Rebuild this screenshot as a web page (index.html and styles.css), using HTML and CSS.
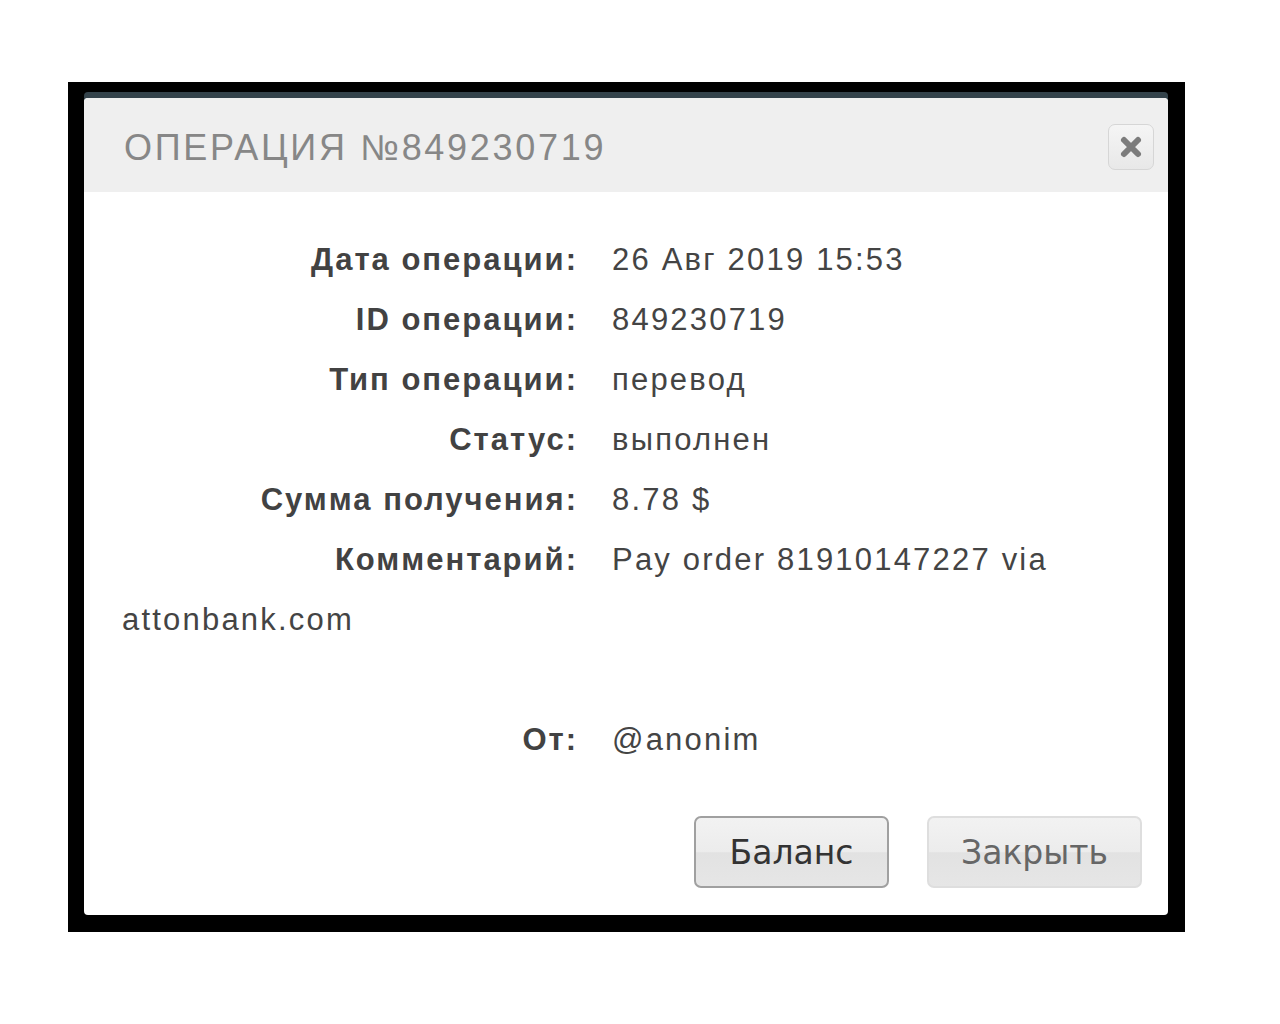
FILE: index.html
```
<!DOCTYPE html>
<html lang="ru">
<head>
    <meta charset="UTF-8">
    <title>Операция №849230719</title>
    <link rel="stylesheet" href="styles.css">
</head>
<body>
    <div class="frame">
        <div class="dialog">
            <div class="dialog-header">
                <span class="dialog-title">ОПЕРАЦИЯ №849230719</span>
                <button class="close-x" title="Закрыть">
                    <svg width="26" height="26" viewBox="0 0 26 26">
                        <path d="M6 6 L20 20 M20 6 L6 20" stroke="#7c7c7c" stroke-width="6" stroke-linecap="round"/>
                    </svg>
                </button>
            </div>
            <div class="dialog-body">
                <div class="row"><span class="label">Дата операции:</span>26 Авг 2019 15:53</div>
                <div class="row"><span class="label">ID операции:</span>849230719</div>
                <div class="row"><span class="label">Тип операции:</span>перевод</div>
                <div class="row"><span class="label">Статус:</span>выполнен</div>
                <div class="row"><span class="label">Сумма получения:</span>8.78 $</div>
                <div class="row"><span class="label">Комментарий:</span>Pay order 81910147227 via attonbank.com</div>
                <div class="row empty"></div>
                <div class="row"><span class="label">От:</span>@anonim</div>
            </div>
            <div class="dialog-footer">
                <button class="btn btn-main">Баланс</button>
                <button class="btn btn-light">Закрыть</button>
            </div>
        </div>
    </div>
</body>
</html>
```

FILE: styles.css
```
body { margin: 0; background: #fff; font-family: "Liberation Sans", Arial, sans-serif; }
.frame { margin: 82px 0 0 68px; width: 1117px; height: 850px; background: #000; padding: 16px 17px 17px 16px; box-sizing: border-box; }
.dialog { background: #fff; border-radius: 4px; box-shadow: 0 -6px 0 #34434b; height: 100%; display: flex; flex-direction: column; }
.dialog-header { height: 94px; background: #efefef; border-radius: 4px 4px 0 0; display: flex; align-items: center; justify-content: space-between; padding: 4px 14px 0 40px; box-sizing: border-box; }
.dialog-title { font-size: 36px; letter-spacing: 2.7px; color: #878787; padding-top: 2px; }
.close-x { width: 46px; height: 46px; border: 1px solid #d6d6d6; border-radius: 7px; background: linear-gradient(#f5f5f5, #e8e8e8); display: flex; align-items: center; justify-content: center; padding: 0; }
.dialog-body { padding: 38px 30px 0 38px; font-size: 31px; line-height: 60px; color: #444; letter-spacing: 2.2px; }
.row { min-height: 60px; }
.label { display: inline-block; width: 456px; margin-right: 34px; text-align: right; font-weight: bold; color: #424242; letter-spacing: 2px; }
.dialog-footer { margin-top: auto; display: flex; justify-content: flex-end; gap: 38px; padding: 0 26px 27px 0; }
.btn { height: 72px; border-radius: 7px; font-family: "DejaVu Sans", Verdana, sans-serif; font-size: 33px; background: linear-gradient(#f2f2f2 0%, #ececec 50%, #e2e2e2 51%, #e6e6e6 100%); cursor: pointer; }
.btn-main { width: 195px; border: 2px solid #a0a0a0; color: #333; }
.btn-light { width: 215px; border: 2px solid #dedede; color: #666; }
```
